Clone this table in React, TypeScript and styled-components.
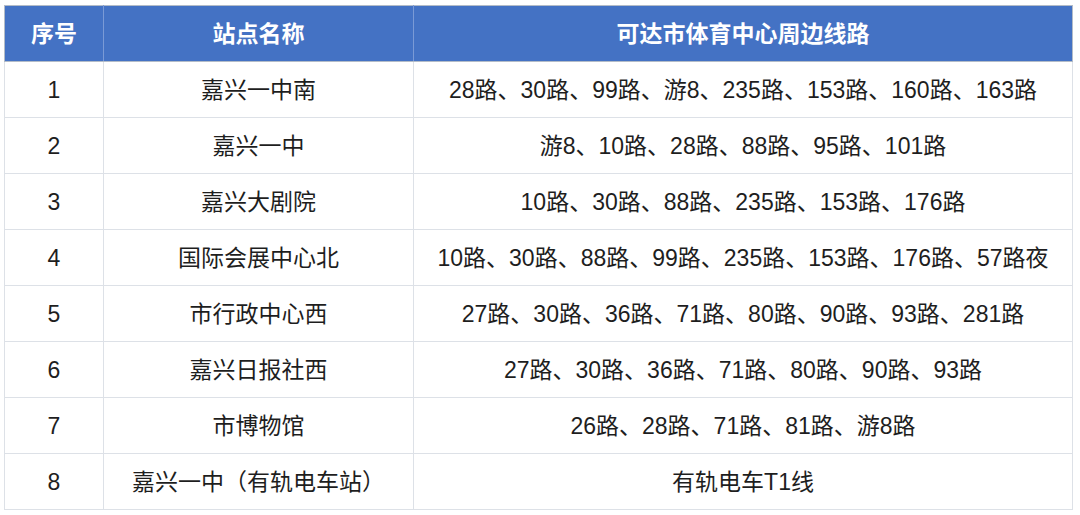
import styled, { createGlobalStyle } from 'styled-components'

const rows: [string, string, string][] = [
  ['1', '嘉兴一中南', '28路、30路、99路、游8、235路、153路、160路、163路'],
  ['2', '嘉兴一中', '游8、10路、28路、88路、95路、101路'],
  ['3', '嘉兴大剧院', '10路、30路、88路、235路、153路、176路'],
  ['4', '国际会展中心北', '10路、30路、88路、99路、235路、153路、176路、57路夜'],
  ['5', '市行政中心西', '27路、30路、36路、71路、80路、90路、93路、281路'],
  ['6', '嘉兴日报社西', '27路、30路、36路、71路、80路、90路、93路'],
  ['7', '市博物馆', '26路、28路、71路、81路、游8路'],
  ['8', '嘉兴一中（有轨电车站）', '有轨电车T1线'],
]

export default function App() {
  return (
    <>
      <GlobalStyle />
      <Page>
        <Table>
          <colgroup>
            <col style={{ width: 99 }} />
            <col style={{ width: 310 }} />
            <col />
          </colgroup>
          <thead>
            <tr>
              <Th>序号</Th>
              <Th>站点名称</Th>
              <Th>可达市体育中心周边线路</Th>
            </tr>
          </thead>
          <tbody>
            {rows.map(([no, name, lines]) => (
              <tr key={no}>
                <Td>{no}</Td>
                <Td>{name}</Td>
                <Td>{lines}</Td>
              </tr>
            ))}
          </tbody>
        </Table>
      </Page>
    </>
  )
}

const GlobalStyle = createGlobalStyle`
  body {
    margin: 0;
    background: #fff;
    font-family: "Liberation Sans", "Noto Sans CJK SC", sans-serif;
  }
`
const Page = styled.div`
  padding: 5px 0 0 4px;
  width: 1080px;
  box-sizing: border-box;
`
const Table = styled.table`
  width: 1069px;
  border-collapse: collapse;
  table-layout: fixed;
  border: 1px solid #b3bcc8;
`
const Th = styled.th`
  height: 55px;
  padding: 0;
  line-height: 26px;
  background: #4472c4;
  color: #fff;
  font-size: 23px;
  font-weight: 700;
  text-align: center;
  vertical-align: middle;
  border-left: 1px solid #7a9ad6;
  border-bottom: 1px solid #b3bcc8;
  &:first-child {
    border-left: none;
  }
`
const Td = styled.td`
  height: 55px;
  padding: 0;
  line-height: 26px;
  color: #1e1e1e;
  font-size: 23px;
  text-align: center;
  vertical-align: middle;
  border: 1px solid #dde1e7;
  white-space: nowrap;
`
